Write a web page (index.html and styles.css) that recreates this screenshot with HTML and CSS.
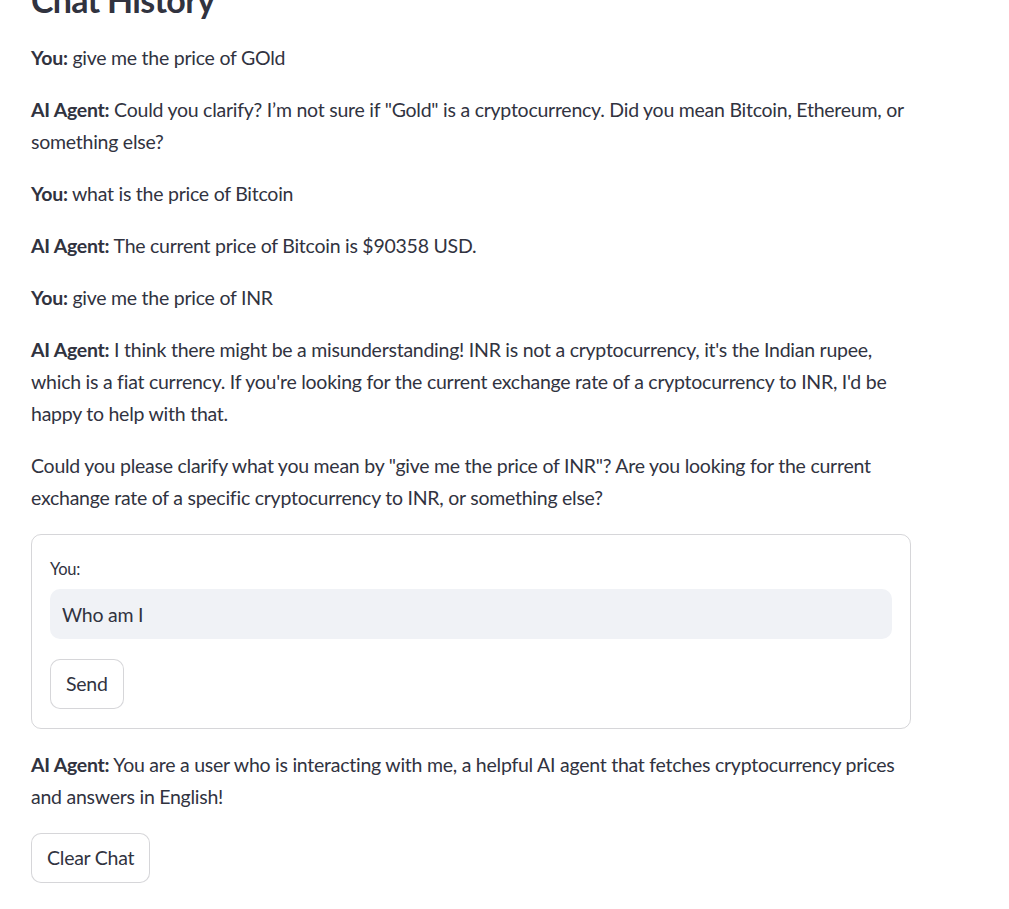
FILE: index.html
```html
<!DOCTYPE html>
<html lang="en">
<head>
<meta charset="utf-8">
<title>Chat History</title>
<link rel="stylesheet" href="styles.css">
</head>
<body>
<main class="main">
  <h2 class="title">Chat History</h2>
  <p class="msg"><strong>You:</strong> give me the price of GOld</p>
  <p class="msg"><strong>AI Agent:</strong> Could you clarify? I’m not sure if "Gold" is a cryptocurrency. Did you mean Bitcoin, Ethereum, or something else?</p>
  <p class="msg"><strong>You:</strong> what is the price of Bitcoin</p>
  <p class="msg"><strong>AI Agent:</strong> The current price of Bitcoin is $90358 USD.</p>
  <p class="msg"><strong>You:</strong> give me the price of INR</p>
  <p class="msg"><strong>AI Agent:</strong> I think there might be a misunderstanding! INR is not a cryptocurrency, it's the Indian rupee, which is a fiat currency. If you're looking for the current exchange rate of a cryptocurrency to INR, I'd be happy to help with that.</p>
  <p class="msg">Could you please clarify what you mean by "give me the price of INR"? Are you looking for the current exchange rate of a specific cryptocurrency to INR, or something else?</p>

  <form class="card">
    <label class="label" for="q">You:</label>
    <input class="input" id="q" type="text" value="Who am I">
    <div class="btn-row"><button type="button" class="btn">Send</button></div>
  </form>

  <p class="msg"><strong>AI Agent:</strong> You are a user who is interacting with me, a helpful AI agent that fetches cryptocurrency prices and answers in English!</p>
  <div class="btn-row"><button type="button" class="btn">Clear Chat</button></div>
</main>
</body>
</html>
```

FILE: styles.css
```css
html, body {
  margin: 0;
  padding: 0;
  background: #ffffff;
}
body {
  font-family: "Lato", "Noto Sans", sans-serif;
  color: #31333f;
  font-size: 19.5px;
  line-height: 32px;
  letter-spacing: -0.25px;
  font-variant-ligatures: none;
  overflow: hidden;
}
.main {
  width: 880px;
  padding-left: 31px;
  margin-top: -22px;
  display: flex;
  flex-direction: column;
  gap: 20px;
}
.title {
  margin: 0;
  font-size: 34px;
  line-height: 44px;
  font-weight: 700;
  letter-spacing: -0.7px;
}
.msg {
  margin: 0;
}
.msg strong {
  font-weight: 700;
}
.card {
  border: 1px solid rgba(49, 51, 63, 0.2);
  border-radius: 10px;
  padding: 19px 18px;
  display: flex;
  flex-direction: column;
  margin: 0;
}
.label {
  font-size: 16.5px;
  line-height: 31px;
  margin-bottom: 4px;
}
.input {
  height: 50px;
  box-sizing: border-box;
  border: none;
  border-radius: 10px;
  background: #f0f2f6;
  padding: 0 12px;
  font: inherit;
  letter-spacing: inherit;
  color: #31333f;
  margin: 0 0 20px;
  outline: none;
}
.btn-row {
  display: flex;
}
.btn {
  font: inherit;
  letter-spacing: inherit;
  color: #31333f;
  background: #ffffff;
  border: 1px solid rgba(49, 51, 63, 0.2);
  border-radius: 10px;
  height: 50px;
  padding: 0 15px;
  line-height: 30px;
}
```
